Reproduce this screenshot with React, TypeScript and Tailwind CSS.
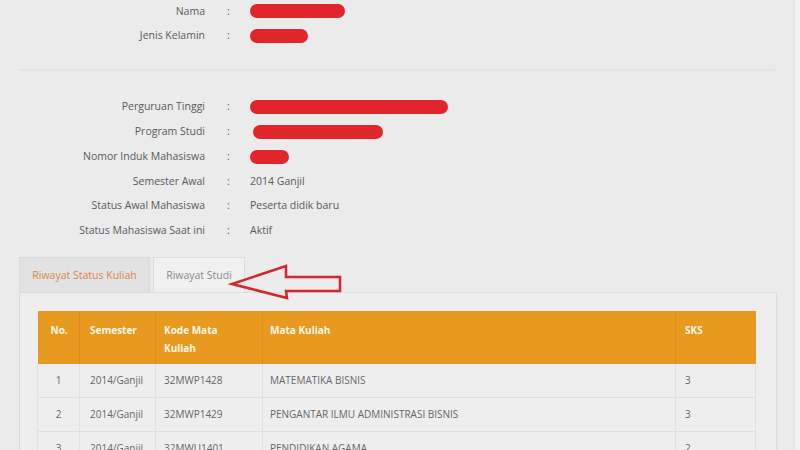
import React from "react";

const FONT = { fontFamily: '"Open Sans", "Noto Sans", Arial, sans-serif' };

interface InfoRowProps {
    label: string;
    value?: string;
    redact?: string;
}

const InfoRow = ({ label, value, redact }: InfoRowProps) => {
    return (
        <div className="flex items-center h-[24.8px] text-[10.5px] text-[#5a5a5a]">
            <div className="w-[205px] text-right shrink-0">{label}</div>
            <div className="w-[45px] pl-[22px] shrink-0">:</div>
            {redact ? (
                <div className={`h-[14px] rounded-full bg-[#e1262b] ${redact}`}></div>
            ) : (
                <div>{value}</div>
            )}
        </div>
    );
};

const rows = [
    { no: "1", sem: "2014/Ganjil", kode: "32MWP1428", mk: "MATEMATIKA BISNIS", sks: "3" },
    { no: "2", sem: "2014/Ganjil", kode: "32MWP1429", mk: "PENGANTAR ILMU ADMINISTRASI BISNIS", sks: "3" },
    { no: "3", sem: "2014/Ganjil", kode: "32MWU1401", mk: "PENDIDIKAN AGAMA", sks: "2" },
];

export default function App() {
    return (
        <div className="relative w-[800px] h-[450px] overflow-hidden bg-[#ebebeb]" style={FONT}>
            <div className="absolute right-0 top-0 w-[6px] h-full bg-[#f2f2f2] border-l border-[#e2e2e2]"></div>

            {/* data diri */}
            <div className="-mt-[1px]">
                <InfoRow label="Nama" redact="w-[95px]" />
                <InfoRow label="Jenis Kelamin" redact="w-[58px]" />
            </div>

            <div className="mt-[20px] mx-[20px] w-[755px] border-t-2 border-[#e4e4e4]"></div>

            {/* data akademik */}
            <div className="mt-[24px]">
                <InfoRow label="Perguruan Tinggi" redact="w-[198px]" />
                <InfoRow label="Program Studi" redact="w-[130px] ml-[3px]" />
                <InfoRow label="Nomor Induk Mahasiswa" redact="w-[39px]" />
                <InfoRow label="Semester Awal" value="2014 Ganjil" />
                <InfoRow label="Status Awal Mahasiswa" value="Peserta didik baru" />
                <InfoRow label="Status Mahasiswa Saat ini" value="Aktif" />
            </div>

            {/* tabs */}
            <div className="mt-[14px] ml-[19px] flex items-end h-[35px] text-[10.5px]">
                <div className="w-[131px] h-[35px] flex items-center justify-center bg-[#e2e2e2] border border-[#dadada] border-b-0 text-[#d9844c]">
                    Riwayat Status Kuliah
                </div>
                <div className="ml-[3px] w-[92px] h-[35px] flex items-center justify-center bg-[#f0f0f0] border border-[#dcdcdc] border-b-0 text-[#8a8a8a]">
                    Riwayat Studi
                </div>
            </div>

            <div className="ml-[19px] w-[758px] h-[200px] bg-[#eeeeee] border border-[#dcdcdc] pt-[18px] pl-[17px]">
                <table className="w-[718px] border-collapse text-[10px] table-fixed">
                    <colgroup>
                        <col className="w-[42px]" />
                        <col className="w-[76px]" />
                        <col className="w-[107px]" />
                        <col className="w-[413px]" />
                        <col className="w-[80px]" />
                    </colgroup>
                    <thead>
                        <tr className="h-[53px] bg-[#e8991f] text-[#fff8e8] font-bold text-left align-top">
                            <th className="pl-[13px] pt-[10px] leading-[18px] border-r border-[#dd8f1a]">No.</th>
                            <th className="pl-[10px] pt-[10px] leading-[18px] border-r border-[#dd8f1a]">Semester</th>
                            <th className="pl-[8px] pt-[10px] leading-[18px] border-r border-[#dd8f1a]">Kode Mata<br />Kuliah</th>
                            <th className="pl-[7px] pt-[10px] leading-[18px] border-r border-[#dd8f1a]">Mata Kuliah</th>
                            <th className="pl-[9px] pt-[10px] leading-[18px]">SKS</th>
                        </tr>
                    </thead>
                    <tbody className="text-[#666666]">
                        {rows.map((r) => (
                            <tr key={r.no} className="h-[33.5px] border-b border-[#e0e0e0]">
                                <td className="text-center border-r border-l border-[#e0e0e0]">{r.no}</td>
                                <td className="pl-[10px] border-r border-[#e0e0e0]">{r.sem}</td>
                                <td className="pl-[8px] border-r border-[#e0e0e0]">{r.kode}</td>
                                <td className="pl-[7px] border-r border-[#e0e0e0]">{r.mk}</td>
                                <td className="pl-[9px] border-r border-[#e0e0e0]">{r.sks}</td>
                            </tr>
                        ))}
                    </tbody>
                </table>
            </div>

            {/* panah merah */}
            <svg className="absolute left-0 top-0" width="800" height="450">
                <polygon
                    points="232,284 286,266 286,277 340,277 340,291 286,291 287,298"
                    fill="none"
                    stroke="#d4262c"
                    strokeWidth="2.5"
                    strokeLinejoin="miter"
                />
            </svg>
        </div>
    );
}
